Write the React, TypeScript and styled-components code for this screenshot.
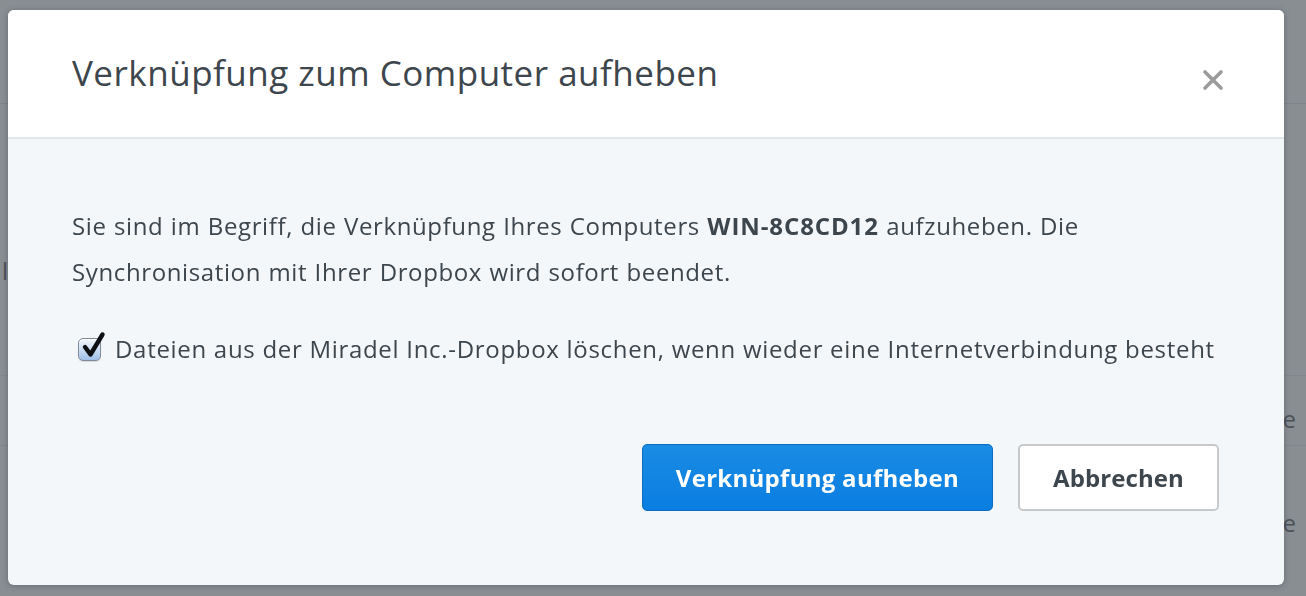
import React from "react";
import styled, { createGlobalStyle } from "styled-components";

const GlobalStyle = createGlobalStyle`
  html, body {
    margin: 0;
    padding: 0;
    background: #898e93;
    font-family: "Open Sans", "Noto Sans", Arial, sans-serif;
    overflow: hidden;
  }
  * { box-sizing: border-box; }
`;

/* ---------- dimmed page behind the dialog ---------- */
const Page = styled.div`
  display: flex;
  flex-direction: column;
  width: 1306px;
  height: 596px;
  color: #4c5257;
  font-size: 24px;
`;

const PageHeader = styled.div`
  height: 104px;
  border-bottom: 1px solid #7d848a;
`;

const PageRow = styled.div<{ $h: number; $pt: number }>`
  height: ${(p) => p.$h}px;
  padding-top: ${(p) => p.$pt}px;
  border-bottom: 1px solid #80878d;
  display: flex;
  justify-content: space-between;
  align-items: flex-start;
  line-height: 30px;
  &:last-child { border-bottom: none; }
`;

const RowLeft = styled.span`
  padding-left: 2px;
`;

const RowRight = styled.span`
  padding-right: 10px;
`;

/* ---------- dialog ---------- */
const Overlay = styled.div`
  position: fixed;
  inset: 0;
  padding: 10px 0 0 8px;
`;

const Modal = styled.div`
  width: 1276px;
  border-radius: 6px;
  overflow: hidden;
  background: #f4f7fa;
  box-shadow: 0 1px 6px rgba(40, 46, 52, 0.35);
  color: #3d464d;
`;

const Header = styled.div`
  display: flex;
  justify-content: space-between;
  align-items: flex-start;
  padding: 39px 60px 40px 64px;
  background: #ffffff;
  border-bottom: 2px solid #e3e6e9;
`;

const Title = styled.h1`
  margin: 0;
  font-size: 35px;
  line-height: 48px;
  font-weight: 400;
  letter-spacing: 0.5px;
  color: #3d464d;
`;

const CloseButton = styled.button`
  margin-top: 20px;
  width: 22px;
  height: 22px;
  padding: 0;
  border: none;
  background: transparent;
  display: flex;
  cursor: pointer;
`;

const Body = styled.div`
  padding: 64px 64px 74px 64px;
`;

const Text = styled.p`
  margin: 0;
  font-size: 24px;
  line-height: 46px;
  letter-spacing: 0.62px;
  word-spacing: 0.6px;
  strong { font-weight: 700; letter-spacing: 0.9px; }
`;

const CheckRow = styled.label`
  margin-top: 31px;
  display: flex;
  align-items: center;
  gap: 14px;
  padding-left: 6px;
  font-size: 24px;
  line-height: 46px;
  letter-spacing: 0.7px;
  cursor: pointer;
`;

const CheckBox = styled.span`
  position: relative;
  width: 23px;
  height: 23px;
  flex: none;
  border-radius: 5px;
  border: 1px solid #7f8a96;
  background: linear-gradient(#f4f8fd 0%, #cfe0f4 45%, #9fc1e8 100%);
  box-shadow: inset 0 1px 1px rgba(255, 255, 255, 0.9), 0 1px 1px rgba(0, 0, 0, 0.12);
`;

const CheckMark = styled.svg`
  position: absolute;
  left: 3px;
  top: -7px;
  width: 24px;
  height: 28px;
  overflow: visible;
`;

const Actions = styled.div`
  margin-top: 72px;
  display: flex;
  justify-content: flex-end;
  gap: 25px;
  padding-right: 1px;
`;

const Button = styled.button<{ $primary?: boolean }>`
  height: 67px;
  padding: 0 33px;
  border-radius: 5px;
  font-family: inherit;
  font-size: 24px;
  font-weight: 700;
  letter-spacing: ${(p) => (p.$primary ? "0.28px" : "0.1px")};
  cursor: pointer;
  border: ${(p) => (p.$primary ? "1px solid #0d6cc0" : "2px solid #c7c9cb")};
  background: ${(p) =>
    p.$primary ? "linear-gradient(#1a8ce3, #0a7de2)" : "#ffffff"};
  color: ${(p) => (p.$primary ? "#ffffff" : "#3d464d")};
`;

export default function App() {
  return (
    <>
      <GlobalStyle />
      <Page>
        <PageHeader />
        <PageRow $h={272} $pt={152}>
          <RowLeft>l</RowLeft>
          <RowRight></RowRight>
        </PageRow>
        <PageRow $h={70} $pt={28}>
          <RowLeft></RowLeft>
          <RowRight>Online</RowRight>
        </PageRow>
        <PageRow $h={150} $pt={62}>
          <RowLeft></RowLeft>
          <RowRight>Online</RowRight>
        </PageRow>
      </Page>
      <Overlay>
        <Modal role="dialog">
          <Header>
            <Title>Verknüpfung zum Computer aufheben</Title>
            <CloseButton aria-label="Schließen">
              <svg width="22" height="22" viewBox="0 0 22 22">
                <path
                  d="M3 3 L19 19 M19 3 L3 19"
                  stroke="#9b9b9b"
                  strokeWidth="3.6"
                  strokeLinecap="round"
                />
              </svg>
            </CloseButton>
          </Header>
          <Body>
            <Text>
              Sie sind im Begriff, die Verknüpfung Ihres Computers{" "}
              <strong>WIN-8C8CD12</strong> aufzuheben. Die Synchronisation mit
              Ihrer Dropbox wird sofort beendet.
            </Text>
            <CheckRow>
              <CheckBox>
                <CheckMark viewBox="0 0 24 28">
                  <path
                    d="M3 15 L8.5 22.5 L20.5 2.5"
                    fill="none"
                    stroke="#0e1114"
                    strokeWidth="4.4"
                    strokeLinecap="round"
                    strokeLinejoin="round"
                  />
                </CheckMark>
              </CheckBox>
              Dateien aus der Miradel Inc.-Dropbox löschen, wenn wieder eine
              Internetverbindung besteht
            </CheckRow>
            <Actions>
              <Button $primary>Verknüpfung aufheben</Button>
              <Button>Abbrechen</Button>
            </Actions>
          </Body>
        </Modal>
      </Overlay>
    </>
  );
}
